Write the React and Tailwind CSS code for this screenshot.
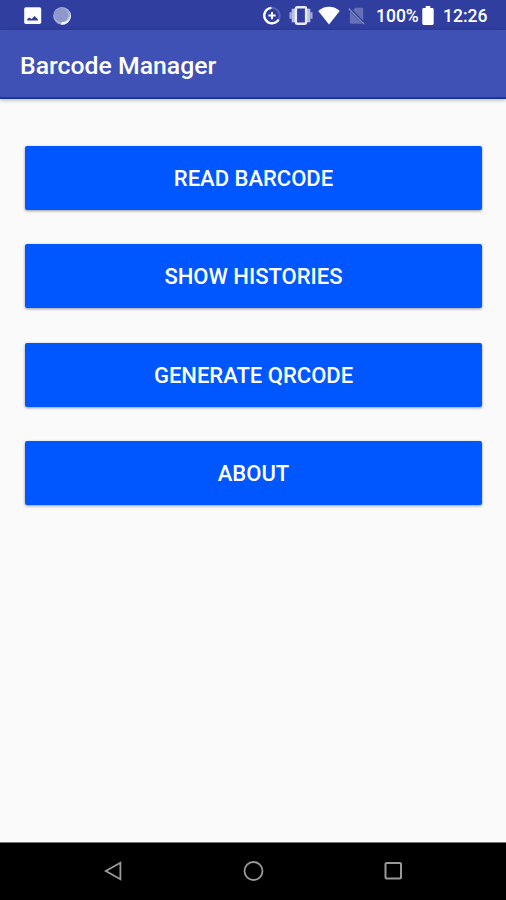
import "react"

const menuItems = [
    { id: "read", label: "Read Barcode" },
    { id: "histories", label: "Show Histories" },
    { id: "generate", label: "Generate QRCode" },
    { id: "about", label: "About" },
]

function PictureIcon() {
    return <svg className="ml-6 shrink-0" width="18" height="18" viewBox="0 0 18 18">
        <rect x="0.2" y="0.2" width="17" height="16.8" rx="1.8" fill="#fff" />
        <path d="M3.2 13.4V12L5.4 10.4 7.6 12.1 10.6 8.9 14 12.4V13.4Z" fill="#303f9f" />
    </svg>
}

function MoonIcon() {
    return <svg className="ml-[11px] shrink-0" width="18" height="18" viewBox="0 0 18 18">
        <circle cx="9" cy="8.8" r="8.8" fill="#a9b0d8" />
        <path d="M15.8 3.2A8.8 8.8 0 0 1 7.5 17.5L9 15A7.5 7.5 0 0 0 15.8 3.2Z" fill="#f1f3fb" />
        <circle cx="8.2" cy="8" r="7" fill="#8f98cc" />
    </svg>
}

function DataSaverIcon() {
    return <svg className="shrink-0" width="20" height="20" viewBox="0 0 20 20" fill="none">
        <circle cx="10" cy="9.6" r="7.7" stroke="#5663b1" strokeWidth="2.2" />
        <path d="M9.4 1.9A7.7 7.7 0 1 0 16.6 13.5" stroke="#fff" strokeWidth="2.4" />
        <path d="M10 6V13.2M6.4 9.6H13.6" stroke="#fff" strokeWidth="2" />
    </svg>
}

function VibrateIcon() {
    return <svg className="ml-[7px] shrink-0" width="24" height="20" viewBox="0 0 24 20">
        <path d="M1.6 6.2V12.8M22.4 6.2V12.8" stroke="#a5add7" strokeWidth="2.2" />
        <path d="M4.6 2.8V16.2M19.4 2.8V16.2" stroke="#bcc2e1" strokeWidth="3.8" />
        <rect x="6.9" y="1.3" width="10.2" height="16.4" rx="1.2" fill="#303f9f" stroke="#e9ebf6" strokeWidth="2.4" />
    </svg>
}

function WifiIcon() {
    return <svg className="ml-[5px] shrink-0" width="22" height="20" viewBox="0 0 22 20">
        <path d="M11 18.4 0.3 4.9C3.2 2.3 6.9 0.7 11 0.7S18.8 2.3 21.7 4.9Z" fill="#fff" />
    </svg>
}

function NoSimIcon() {
    return <svg className="ml-[8px] shrink-0" width="17" height="20" viewBox="0 0 17 20">
        <path d="M5 4.2 7.2 1.8H14.2Q15.2 1.8 15.2 2.8V15Z" fill="#6570b6" />
        <path d="M1.9 5.4 14.4 17.7H2.9Q1.9 17.7 1.9 16.7Z" fill="#6570b6" />
        <path d="M0.8 2.6 16 17.9" stroke="#7d87c3" strokeWidth="1.5" />
        <path d="M3 3.2 15.6 15.9" stroke="#303f9f" strokeWidth="1.1" />
    </svg>
}

function BatteryIcon() {
    return <svg className="shrink-0" width="12" height="20" viewBox="0 0 12 20">
        <path d="M3.7 0.1H8.3V2.1H10.4Q11.7 2.1 11.7 3.4V17.6Q11.7 18.9 10.4 18.9H1.6Q0.3 18.9 0.3 17.6V3.4Q0.3 2.1 1.6 2.1H3.7Z" fill="#fff" />
    </svg>
}

function StatusBar() {
    return <div className="flex h-[30px] shrink-0 items-center bg-[#303f9f] pr-[17px] pt-px text-white">
        <PictureIcon />
        <MoonIcon />
        <div className="ml-auto flex items-center">
            <DataSaverIcon />
            <VibrateIcon />
            <WifiIcon />
            <NoSimIcon />
            <span className="ml-[11px] w-[43px] whitespace-nowrap text-[17.5px] leading-5 font-medium">100%</span>
            <span className="ml-[3px] flex"><BatteryIcon /></span>
            <span className="ml-[9px] w-[46px] whitespace-nowrap text-[17.5px] leading-5 font-medium">12:26</span>
        </div>
    </div>
}

function NavBar() {
    return <nav className="flex h-[58px] shrink-0 items-center justify-center gap-[119px] border-t border-[#777] bg-black pb-0.5">
        <svg width="20" height="22" viewBox="0 0 20 22" fill="none" stroke="#999" strokeWidth="1.8">
            <path d="M17.4 2.8V19.2L2.8 11Z" />
        </svg>
        <svg width="22" height="22" viewBox="0 0 22 22" fill="none" stroke="#999" strokeWidth="1.8">
            <circle cx="11.5" cy="11" r="9" />
        </svg>
        <svg width="20" height="22" viewBox="0 0 20 22" fill="none" stroke="#999" strokeWidth="2">
            <rect x="2.5" y="3" width="15.5" height="15.5" rx="1" />
        </svg>
    </nav>
}

export default function App() {
    return <div className="flex h-[900px] w-[506px] flex-col overflow-hidden bg-[#fafafa] font-['Roboto',sans-serif]">
        <StatusBar />
        <header className="flex h-[69px] shrink-0 items-center border-b-2 border-[#1636a0] bg-[#3f51b5] pl-5 pt-[5px] shadow-[0_1px_4px_rgba(0,0,0,0.3)]">
            <h1 className="text-[24.8px] leading-8 font-medium text-white">Barcode Manager</h1>
        </header>

        <main className="flex flex-1 flex-col gap-[34.5px] px-[25px] pt-[46.5px] pr-6">
            {menuItems.map((item) => (
                <button
                    key={item.id}
                    className="h-16 shrink-0 rounded-xs bg-[#0057ff] pt-0.5 text-[22px] leading-7 font-medium text-white uppercase shadow-[0_1px_3px_rgba(0,0,0,0.4)]"
                >
                    {item.label}
                </button>
            ))}
        </main>

        <NavBar />
    </div>
}
